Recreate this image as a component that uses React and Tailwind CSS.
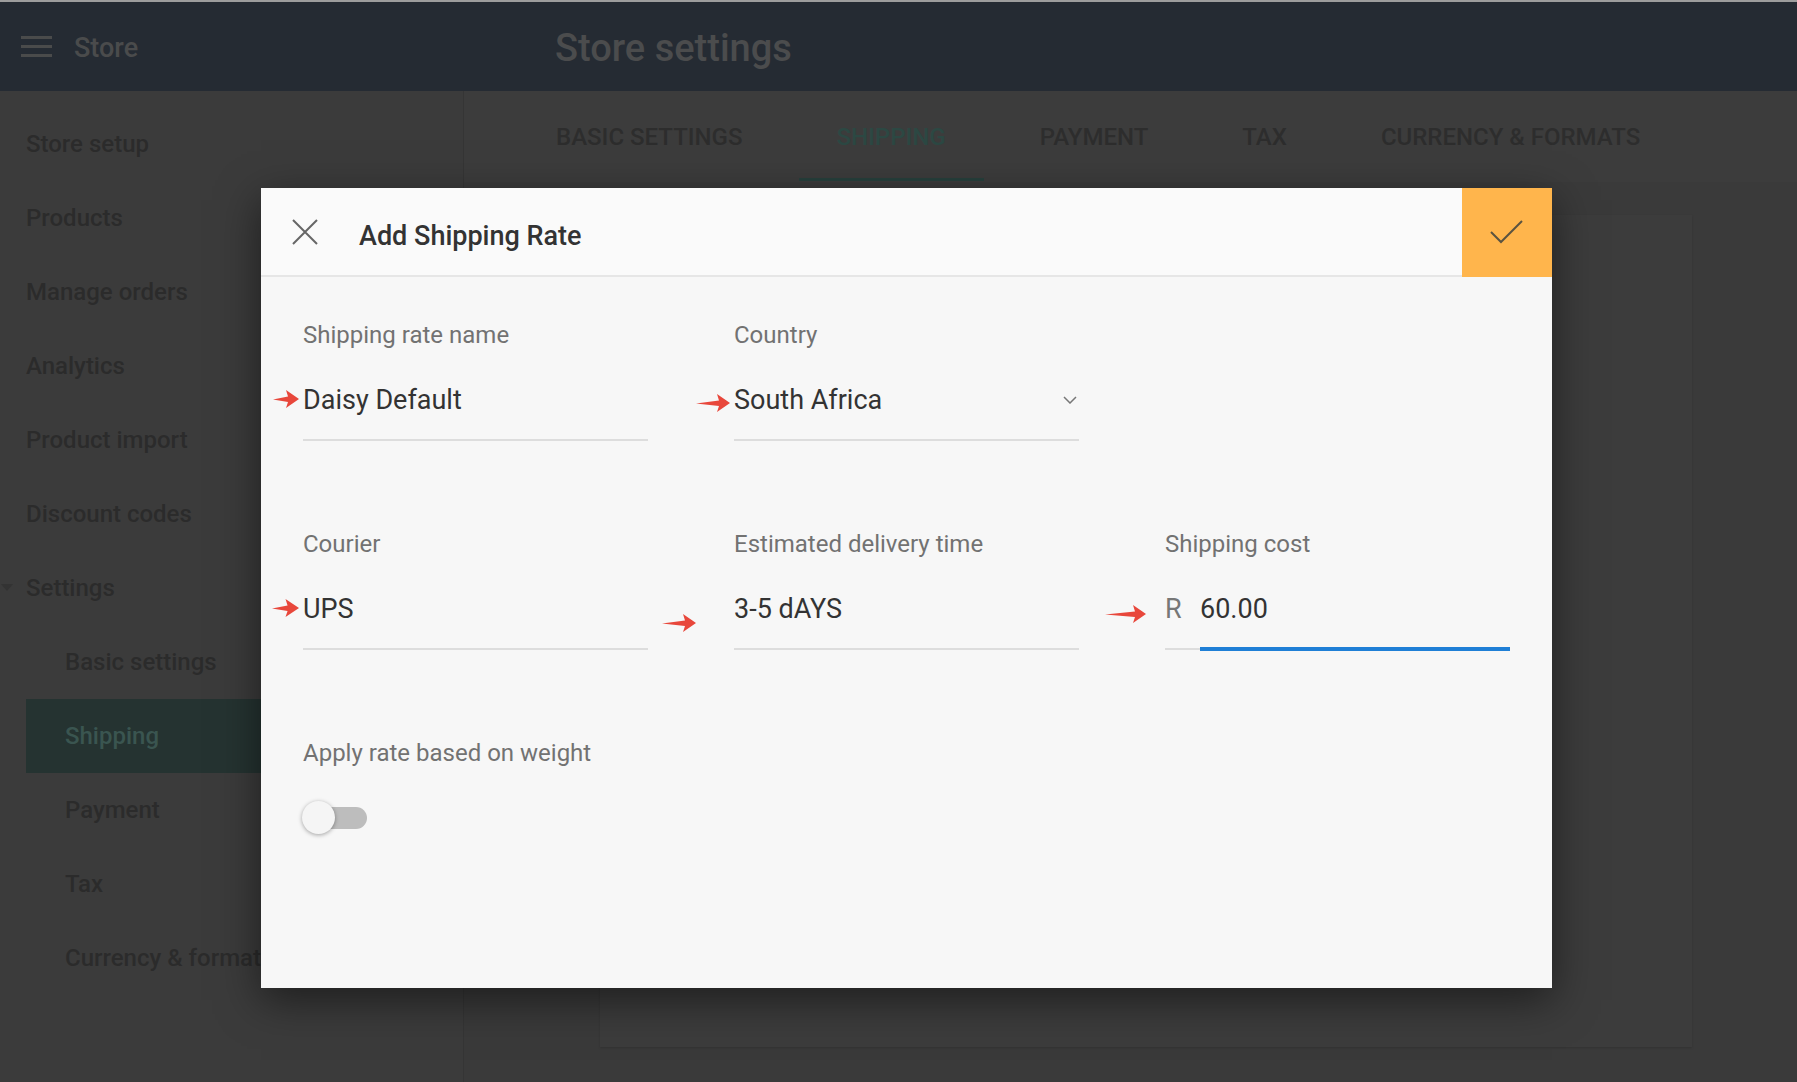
import React from 'react'

const sideItems = [
  { label: 'Store setup' },
  { label: 'Products' },
  { label: 'Manage orders' },
  { label: 'Analytics' },
  { label: 'Product import' },
  { label: 'Discount codes' },
  { label: 'Settings', caret: true },
  { label: 'Basic settings', sub: true },
  { label: 'Shipping', sub: true, active: true },
  { label: 'Payment', sub: true },
  { label: 'Tax', sub: true },
  { label: 'Currency & formats', sub: true },
]

const tabs = ['BASIC SETTINGS', 'SHIPPING', 'PAYMENT', 'TAX', 'CURRENCY & FORMATS']

function RedArrow({ className, w = 26 }) {
  // annotation arrow drawn on the screenshot
  return (
    <svg className={className} viewBox={`0 0 ${w} 20`} preserveAspectRatio="none">
      <polygon points={`0,10.5 ${w - 11},7.5 ${w - 13},1 ${w},10 ${w - 13},19 ${w - 11},13`} fill="#e8473b" />
    </svg>
  )
}

function Field({ label, children, underline }) {
  return (
    <div>
      <div className="text-[24px] leading-[26px] text-[#727272]">{label}</div>
      <div className="mt-[36px] h-[32px] flex items-center text-[27px] text-[#333333]">{children}</div>
      {underline || <div className="mt-[23px] h-[2px] bg-[#dddddd]" />}
    </div>
  )
}

export default function App() {
  return (
    <div className="relative w-[1797px] h-[1082px] overflow-hidden bg-[#3a3a3a] font-['Roboto',sans-serif]">
      <div className="h-[2px] bg-[#9d9d9d]" />
      {/* top bar */}
      <div className="h-[89px] bg-[#252b33] flex items-center">
        <div className="w-[464px] flex items-center">
          <div className="ml-[21px] w-[31px] flex flex-col gap-[6px]">
            <div className="h-[3px] bg-[#4a4b4b]" />
            <div className="h-[3px] bg-[#4a4b4b]" />
            <div className="h-[3px] bg-[#4a4b4b]" />
          </div>
          <span className="ml-[22px] pt-[3px] text-[27px] font-medium text-[#4a4b4c]">Store</span>
        </div>
        <span className="ml-[91px] pt-[3px] text-[38px] font-medium text-[#4b4c4d]">Store settings</span>
      </div>

      <div className="flex h-[991px]">
        {/* sidebar */}
        <div className="w-[464px] bg-[#3b3b3b] border-r border-[#353535] pt-[16px]">
          {sideItems.map((it) => (
            <div key={it.label} className="h-[74px] relative flex items-center">
              {it.caret && (
                <svg className="absolute left-[1px] top-[33px] w-[12px] h-[8px]" viewBox="0 0 12 8">
                  <polygon points="0,0 12,0 6,7" fill="#333333" />
                </svg>
              )}
              {it.active ? (
                <div className="ml-[26px] h-full flex-1 bg-[#253331] flex items-center pl-[39px] text-[24px] font-medium text-[#3a5550]">
                  {it.label}
                </div>
              ) : (
                <span className={`${it.sub ? 'pl-[65px]' : 'pl-[26px]'} text-[24px] font-medium text-[#2b2b2b]`}>{it.label}</span>
              )}
            </div>
          ))}
        </div>

        {/* main */}
        <div className="flex-1">
          <div className="h-[91px] bg-[#3c3c3c] flex pl-[45px]">
            {tabs.map((t) => (
              <div key={t} className="relative px-[47px] flex items-center">
                <span className={`text-[24px] font-medium ${t === 'SHIPPING' ? 'text-[#2c4843]' : 'text-[#2d2d2d]'}`}>{t}</span>
                {t === 'SHIPPING' && <div className="absolute left-[9px] right-[9px] bottom-[1px] h-[3px] bg-[#27403c]" />}
              </div>
            ))}
          </div>
          <div className="ml-[136px] mt-[33px] w-[1092px] h-[832px] bg-[#3c3c3c] shadow-[0_1px_2px_rgba(0,0,0,0.15)]" />
        </div>
      </div>

      {/* dialog */}
      <div className="absolute left-[261px] top-[188px] w-[1291px] h-[800px] bg-[#f7f7f7] shadow-[0_12px_40px_rgba(0,0,0,0.5)]">
        <div className="flex h-[89px]">
          <div className="flex-1 flex items-center bg-[#fafafa] border-b-2 border-[#e6e6e6]">
            <svg className="ml-[31px] w-[26px] h-[26px]" viewBox="0 0 26 26">
              <path d="M1 1 L25 25 M25 1 L1 25" stroke="#666666" strokeWidth="2" fill="none" />
            </svg>
            <span className="ml-[41px] pt-[9px] text-[27px] font-medium text-[#333333]">Add Shipping Rate</span>
          </div>
          <div className="w-[90px] h-[89px] bg-[#ffb54c] relative">
            <svg className="absolute left-0 top-0 w-[90px] h-[89px]" viewBox="0 0 90 89">
              <path d="M29 44 L39 54 L60 33" stroke="#5b5340" strokeWidth="2" fill="none" />
            </svg>
          </div>
        </div>

        <div className="relative px-[42px] pt-[45px]">
          <div className="grid grid-cols-[345px_345px_345px] gap-x-[86px] gap-y-[90px]">
            <Field label="Shipping rate name">Daisy Default</Field>
            <Field label="Country">
              <div className="flex-1 flex items-center justify-between">
                <span>South Africa</span>
                <svg className="mr-[2px] w-[14px] h-[8px]" viewBox="0 0 14 8">
                  <path d="M1 1 L7 7 L13 1" stroke="#777777" strokeWidth="1.5" fill="none" />
                </svg>
              </div>
            </Field>
            <div />
            <Field label="Courier">UPS</Field>
            <Field label="Estimated delivery time">3-5 dAYS</Field>
            <Field
              label="Shipping cost"
              underline={
                <div className="relative mt-[23px] h-[2px] bg-[#dddddd]">
                  <div className="absolute left-[35px] right-0 top-[-1px] h-[4px] bg-[#1f7fd6]" />
                </div>
              }
            >
              <span className="w-[35px] text-[#777777]">R</span>
              <span>60.00</span>
            </Field>
          </div>

          <div className="mt-[90px] text-[24px] leading-[26px] text-[#727272]">Apply rate based on weight</div>
          <div className="mt-[35px] relative w-[68px] h-[34px]">
            <div className="absolute left-[2px] top-[6px] w-[62px] h-[22px] rounded-full bg-[#bdbdbd]" />
            <div className="absolute left-[-1px] top-0 w-[33px] h-[33px] rounded-full bg-[#f5f5f5] shadow-[0_1px_4px_rgba(0,0,0,0.35)]" />
          </div>
        </div>

        {/* annotation arrows */}
        <RedArrow className="absolute left-[12px] top-[201px] w-[26px] h-[20px]" />
        <RedArrow className="absolute left-[435px] top-[205px] w-[34px] h-[20px]" w={34} />
        <RedArrow className="absolute left-[11px] top-[410px] w-[27px] h-[20px]" />
        <RedArrow className="absolute left-[401px] top-[425px] w-[34px] h-[20px]" w={34} />
        <RedArrow className="absolute left-[844px] top-[416px] w-[41px] h-[20px]" w={41} />
      </div>
    </div>
  )
}
